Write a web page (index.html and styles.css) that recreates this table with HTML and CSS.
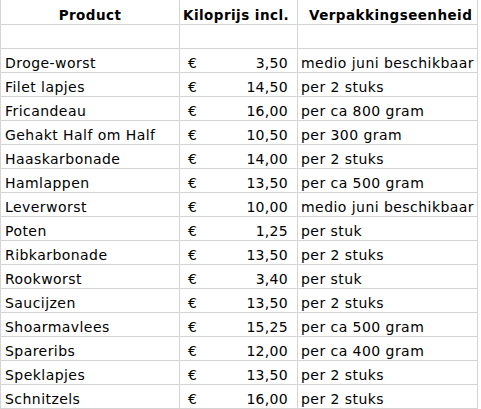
FILE: index.html
```html
<!DOCTYPE html>
<html>
<head>
<meta charset="utf-8">
<link rel="stylesheet" href="styles.css">
</head>
<body>
<div class="sheet">
  <div class="cell head c1">Product</div>
  <div class="cell head c2">Kiloprijs incl.</div>
  <div class="cell head c3">Verpakkingseenheid</div>
  <div class="cell c1"></div><div class="cell c2"></div><div class="cell c3"></div>

  <div class="cell c1">Droge-worst</div><div class="cell c2 price"><span>€</span><span>3,50</span></div><div class="cell c3">medio juni beschikbaar</div>
  <div class="cell c1">Filet lapjes</div><div class="cell c2 price"><span>€</span><span>14,50</span></div><div class="cell c3">per 2 stuks</div>
  <div class="cell c1">Fricandeau</div><div class="cell c2 price"><span>€</span><span>16,00</span></div><div class="cell c3">per ca 800 gram</div>
  <div class="cell c1">Gehakt Half om Half</div><div class="cell c2 price"><span>€</span><span>10,50</span></div><div class="cell c3">per 300 gram</div>
  <div class="cell c1">Haaskarbonade</div><div class="cell c2 price"><span>€</span><span>14,00</span></div><div class="cell c3">per 2 stuks</div>
  <div class="cell c1">Hamlappen</div><div class="cell c2 price"><span>€</span><span>13,50</span></div><div class="cell c3">per ca 500 gram</div>
  <div class="cell c1">Leverworst</div><div class="cell c2 price"><span>€</span><span>10,00</span></div><div class="cell c3">medio juni beschikbaar</div>
  <div class="cell c1">Poten</div><div class="cell c2 price"><span>€</span><span>1,25</span></div><div class="cell c3">per stuk</div>
  <div class="cell c1">Ribkarbonade</div><div class="cell c2 price"><span>€</span><span>13,50</span></div><div class="cell c3">per 2 stuks</div>
  <div class="cell c1">Rookworst</div><div class="cell c2 price"><span>€</span><span>3,40</span></div><div class="cell c3">per stuk</div>
  <div class="cell c1">Saucijzen</div><div class="cell c2 price"><span>€</span><span>13,50</span></div><div class="cell c3">per 2 stuks</div>
  <div class="cell c1">Shoarmavlees</div><div class="cell c2 price"><span>€</span><span>15,25</span></div><div class="cell c3">per ca 500 gram</div>
  <div class="cell c1">Spareribs</div><div class="cell c2 price"><span>€</span><span>12,00</span></div><div class="cell c3">per ca 400 gram</div>
  <div class="cell c1">Speklapjes</div><div class="cell c2 price"><span>€</span><span>13,50</span></div><div class="cell c3">per 2 stuks</div>
  <div class="cell c1">Schnitzels</div><div class="cell c2 price"><span>€</span><span>16,00</span></div><div class="cell c3">per 2 stuks</div>
</div>
</body>
</html>
```

FILE: styles.css
```css
html, body {
  margin: 0;
  padding: 0;
  background: #ffffff;
}

.sheet {
  display: grid;
  grid-template-columns: 178px 117px 179px;
  grid-template-rows: 24px;
  grid-auto-rows: 23px;
  gap: 1px;
  padding: 0 1px 1px 1px;
  width: 476px;
  background: #d4d4d4;
  font-family: "DejaVu Sans", sans-serif;
  font-size: 14px;
  letter-spacing: 0.45px;
  color: #000;
}

.cell {
  background: #fff;
  display: flex;
  align-items: flex-end;
  padding-bottom: 2px;
  box-sizing: border-box;
  white-space: nowrap;
  line-height: 14px;
}

.c1 { padding-left: 4px; }
.c3 { padding-left: 3px; }

.price {
  justify-content: space-between;
  padding-left: 8px;
  padding-right: 9px;
  letter-spacing: 0.3px;
}

.head {
  font-weight: bold;
  font-size: 13.5px;
  letter-spacing: 0.45px;
  padding-bottom: 2px;
}

.head.c1 {
  justify-content: center;
  padding-left: 0;
}

.head.c2 {
  padding-left: 3px;
}

.head.c3 {
  padding-left: 11px;
}
```
